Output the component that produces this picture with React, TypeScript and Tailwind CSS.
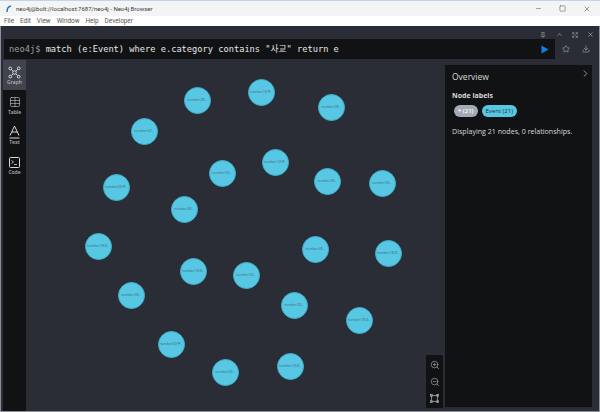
import { Star, Download, Pin, ChevronUp, Expand, X, ChevronRight, ZoomIn, ZoomOut, Minus, Square, Table } from "lucide-react";

const nodes: [number, number, string][] = [
  [197, 100, "number2조.."], [261, 92, "number1부주.."], [331, 107, "number2조.."], [144, 131, "number5부.."],
  [275, 162, "number1부주.."], [222, 173, "number5부.."], [327, 181, "number2조.."], [382, 183, "number3부.."],
  [116, 187, "number4부주.."], [184, 209, "number3조.."], [98, 246, "number1조부.."], [315, 249, "number5조.."],
  [388, 253, "number1조부.."], [193, 271, "number1부조.."], [246, 275, "number3부.."], [131, 295, "number2조.."],
  [294, 305, "number3부.."], [359, 320, "number1조부.."], [171, 344, "number4부주.."], [225, 372, "number2부.."],
  [290, 366, "number1부조.."],
];

function GraphIcon() {
  return (
    <svg width="13" height="13" viewBox="0 0 16 16" fill="none" stroke="#d6d8dc" strokeWidth="1.2">
      <circle cx="8" cy="8" r="2.2" />
      <circle cx="2.8" cy="3" r="1.7" />
      <circle cx="13.2" cy="2.8" r="1.7" />
      <circle cx="2.8" cy="13" r="1.7" />
      <circle cx="13.2" cy="13.2" r="1.7" />
      <path d="M4 4.2 6.4 6.5M12 4 9.6 6.5M4 11.8 6.4 9.5M12 12 9.6 9.5" />
    </svg>
  );
}

function TextIcon() {
  return (
    <svg width="11" height="14" viewBox="0 0 11 14" fill="none" stroke="#d6d8dc" strokeWidth="1">
      <path d="M1 10.5 5.5 1 10 10.5M2.8 7h5.4M.5 13h10" />
    </svg>
  );
}

function CodeIcon() {
  return (
    <svg width="11" height="11" viewBox="0 0 11 11" fill="none" stroke="#d6d8dc" strokeWidth="1">
      <rect x=".5" y=".5" width="10" height="10" rx="1" />
      <path d="M2.5 3.5 4.5 5 2.5 6.5M5 7.5h3" strokeWidth=".8" />
    </svg>
  );
}

function FitIcon() {
  return (
    <svg width="9" height="9" viewBox="0 0 11 11" fill="none" stroke="#a4a7ac" strokeWidth="1">
      <rect x="2" y="2" width="7" height="7" />
      <rect x=".7" y=".7" width="2" height="2" />
      <rect x="8.3" y=".7" width="2" height="2" />
      <rect x=".7" y="8.3" width="2" height="2" />
      <rect x="8.3" y="8.3" width="2" height="2" />
    </svg>
  );
}

function Tab({ icon, label, active }: { icon: React.ReactNode; label: string; active?: boolean }) {
  return (
    <div className={`h-[30px] flex flex-col items-center justify-center ${active ? "bg-[#41444d]" : ""}`}>
      <div className="h-[15px] pt-px flex items-center justify-center">{icon}</div>
      <span className="text-[5px] leading-[7px] font-semibold text-[#b4b6ba]">{label}</span>
    </div>
  );
}

export default function App() {
  return (
    <div className="w-[600px] h-[412px] overflow-hidden bg-[#8b9098] flex flex-col font-['Open_Sans','Noto_Sans_CJK_KR',sans-serif]">
      <div className="h-[16px] shrink-0 bg-[#f3f4f5] border-t border-[#c5d3e6] flex items-center pl-[6px] pr-[8px] text-[#3c3c3c]">
        <svg width="7" height="8" viewBox="0 0 7 8" className="mr-[3px]">
          <path d="M1 7 C1 4 2 1.5 5 1" fill="none" stroke="#2a6fb8" strokeWidth="1.4" />
        </svg>
        <span className="text-[6px] leading-none font-['Roboto','Liberation_Sans',sans-serif]">neo4j@bolt://localhost:7687/neo4j - Neo4j Browser</span>
        <div className="ml-auto flex items-center gap-[17px] mr-[1px]">
          <Minus size={7} strokeWidth={1.5} />
          <Square size={7} strokeWidth={1.5} />
          <X size={8} strokeWidth={1.5} />
        </div>
      </div>
      <div className="h-[10px] shrink-0 bg-white flex items-center gap-[6px] pl-[4px] text-[6.4px] leading-none text-[#555] font-['Roboto','Liberation_Sans',sans-serif]">
        <span>File</span><span>Edit</span><span>View</span><span>Window</span><span>Help</span><span>Developer</span>
      </div>
      <div className="h-[385px] shrink-0 mx-[1px] bg-[#2a2d35] flex flex-col">
        <div className="h-[13px] shrink-0 flex items-center justify-end gap-[9px] pr-[5px] pt-[4px] text-[#b8bbc0]">
          <Pin size={6} strokeWidth={2} className="mr-[1px]" />
          <ChevronUp size={7} strokeWidth={2} />
          <Expand size={6} strokeWidth={2} />
          <X size={7} strokeWidth={2} />
        </div>
        <div className="h-[20px] shrink-0 flex items-center">
          <div className="ml-[3px] w-[551px] h-full bg-[#111213] flex items-center pl-[5px] pr-[6px] font-['DejaVu_Sans_Mono','Noto_Sans_CJK_KR',monospace] text-[8.7px] leading-none whitespace-pre">
            <span className="text-[#9a9da3]">neo4j$ </span>
            <span className="text-[#e6e7e9]">match (e:Event) where e.category contains "사교" return e</span>
            <svg width="8" height="9" viewBox="0 0 8 9" className="ml-auto"><path d="M0.5 0.5 7.5 4.5 0.5 8.5Z" fill="#0d7fe8" /></svg>
          </div>
          <div className="flex items-center gap-[12px] pl-[7px] text-[#b8bbc0]">
            <Star size={8} strokeWidth={1.6} />
            <Download size={8} strokeWidth={1.6} />
          </div>
        </div>
        <div className="flex-1 flex min-h-0 pl-[2px]">
          <div className="w-[23px] shrink-0 bg-[#111213] flex flex-col mt-px">
            <Tab active icon={<GraphIcon />} label="Graph" />
            <Tab icon={<Table size={12} strokeWidth={1.1} color="#d6d8dc" />} label="Table" />
            <Tab icon={<TextIcon />} label="Text" />
            <Tab icon={<CodeIcon />} label="Code" />
          </div>
          <div className="relative flex-1 min-w-0">
            {nodes.map(([cx, cy, label], i) => (
              <div
                key={i}
                style={{ left: cx - 26 - 13.5, top: cy - 59 - 13.5 }}
                className="absolute w-[27px] h-[27px] rounded-full bg-[#57c7e3] border border-[#3fb1cd] flex items-center justify-center text-[3.4px] leading-none text-[#3f6f80] whitespace-nowrap overflow-hidden"
              >
                {label}
              </div>
            ))}
            <div className="absolute right-[156px] top-[296px] w-[17px] h-[53px] bg-[#111213] flex flex-col items-center justify-around py-[2px] text-[#a4a7ac]">
              <ZoomIn size={10} strokeWidth={1.6} />
              <ZoomOut size={10} strokeWidth={1.6} />
              <FitIcon />
            </div>
            <aside className="absolute right-[7px] top-[6px] bottom-[4px] w-[147px] bg-[#111213] pl-[7px] pt-[5px] text-[#d8d9dc]">
              <ChevronRight size={11} strokeWidth={1.6} className="absolute right-[1px] top-[3px] text-[#c0c2c6]" />
              <div className="text-[8.5px] leading-[12px] mt-px">Overview</div>
              <div className="text-[7px] leading-[10px] font-bold mt-[8px]">Node labels</div>
              <div className="flex gap-[4px] mt-[4px] ml-[2px]">
                <span className="h-[12px] px-[4px] rounded-full bg-[#a5abb6] text-white text-[6px] font-semibold leading-[12px]">* (21)</span>
                <span className="h-[12px] px-[4px] rounded-full bg-[#57c7e3] text-[#2a2d35] text-[6px] leading-[12px]">Event (21)</span>
              </div>
              <div className="text-[7.1px] leading-[10px] mt-[9px]">Displaying 21 nodes, 0 relationships.</div>
            </aside>
          </div>
        </div>
      </div>
    </div>
  );
}
